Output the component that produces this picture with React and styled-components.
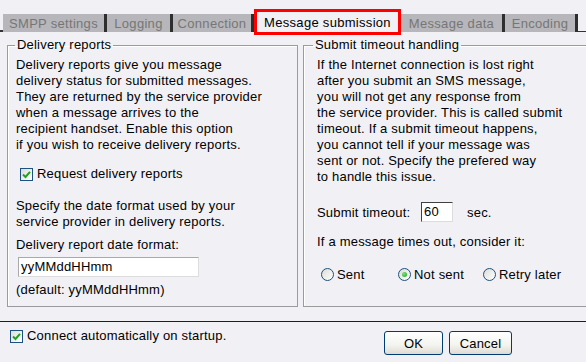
import React from "react";
import styled, { createGlobalStyle } from "styled-components";

const Global = createGlobalStyle`
  html, body { margin: 0; padding: 0; background: #f1f1f5; }
  body { font-family: "Liberation Sans", Arial, sans-serif; font-size: 13px; letter-spacing: 0.2px; color: #000; }
`;

const Window = styled.div`
  width: 586px;
  height: 362px;
  overflow: hidden;
  background: #f1f1f5;
  display: flex;
  flex-direction: column;
`;

const TabBar = styled.div`
  height: 18px;
  padding-top: 14px;
  padding-left: 3px;
  display: flex;
  align-items: flex-start;
  position: relative;
  &::before {
    content: "";
    position: absolute;
    left: 0;
    top: 30px;
    width: 3px;
    height: 2px;
    background: #333;
  }
  &::after {
    content: "";
    position: absolute;
    left: 578px;
    right: 0;
    top: 31px;
    height: 1px;
    background: #333;
  }
`;

const Tab = styled.div`
  box-sizing: border-box;
  width: ${(p) => p.$w}px;
  flex: none;
  display: flex;
  align-items: center;
  justify-content: center;
  white-space: nowrap;
  line-height: 16px;
  font-size: 13px;
  letter-spacing: 0.3px;
  ${(p) =>
    p.$active
      ? `
    position: relative;
    z-index: 1;
    margin-top: -5px;
    height: 26px;
    padding-top: 2px;
    border: 3px solid #ff0000;
    background: #f1f1f5;
    color: #000;
  `
      : `
    height: 18px;
    padding-top: 1px;
    background: #b7b7bb;
    color: #767676;
    border-right: 3px solid #2e2e2e;
  `}
`;

const Body = styled.div`
  display: flex;
  gap: 5px;
  margin-top: 5px;
  padding-left: 7px;
`;

const Group = styled.fieldset`
  box-sizing: border-box;
  margin: 0;
  width: ${(p) => p.$w}px;
  flex: none;
  height: 270px;
  padding: 4px 8px 0 ${(p) => p.$padLeft}px;
  border: 1px solid #9b9b9b;
  box-shadow: inset 1px 1px 0 #ffffff;
  min-width: 0;
`;

const Legend = styled.legend`
  padding: 0 2px;
  margin-left: ${(p) => p.$ml}px;
  line-height: 16px;
  font-size: 13px;
`;

const Para = styled.div`
  line-height: 16px;
  white-space: nowrap;
  margin-top: ${(p) => p.$mt || 0}px;
`;

const CheckRow = styled.label`
  display: flex;
  align-items: center;
  gap: 4px;
  height: 16px;
  margin-top: ${(p) => p.$mt || 0}px;
  margin-left: ${(p) => p.$ml || 0}px;
  line-height: 16px;
  white-space: nowrap;
`;

const CheckBox = styled.span`
  box-sizing: border-box;
  width: 13px;
  height: 13px;
  border: 1px solid #1c5180;
  background: linear-gradient(135deg, #dcdcd6, #ffffff);
  display: flex;
  align-items: center;
  justify-content: center;
  flex: none;
`;

const TextInput = styled.div`
  box-sizing: border-box;
  width: ${(p) => p.$w}px;
  height: 20px;
  background: #fff;
  border: 1px solid #dcdcdc;
  border-top-color: ${(p) => (p.$dark ? "#404040" : "#a9a9a9")};
  border-left-color: ${(p) => (p.$dark ? "#404040" : "#a9a9a9")};
  padding: 1px 2px;
  line-height: 16px;
  margin-top: ${(p) => p.$mt || 0}px;
  margin-left: ${(p) => p.$ml || 0}px;
  flex: none;
`;

const TimeoutRow = styled.div`
  display: flex;
  align-items: center;
  margin-top: 17px;
  height: 20px;
`;

const FixedLabel = styled.span`
  width: ${(p) => p.$w}px;
  margin-left: ${(p) => p.$ml || 0}px;
  flex: none;
  white-space: nowrap;
`;

const RadioRow = styled.div`
  display: flex;
  align-items: center;
  margin-top: 16px;
  height: 16px;
  padding-left: 4px;
`;

const RadioItem = styled.label`
  display: flex;
  align-items: center;
  gap: 3px;
  width: ${(p) => p.$w}px;
  flex: none;
  white-space: nowrap;
`;

const RadioCircle = styled.span`
  box-sizing: border-box;
  width: 13px;
  height: 13px;
  border-radius: 50%;
  border: 1px solid #1c5180;
  background: linear-gradient(135deg, #dcdcd6, #ffffff);
  display: flex;
  align-items: center;
  justify-content: center;
  flex: none;
  &::after {
    content: "";
    display: ${(p) => (p.$checked ? "block" : "none")};
    width: 5px;
    height: 5px;
    border-radius: 50%;
    background: radial-gradient(circle at 35% 35%, #7be37b, #21a121);
  }
`;

const Separator = styled.div`
  height: 1px;
  background: #1e1e1e;
  margin-top: 14px;
`;

const Footer = styled.div`
  display: flex;
  align-items: flex-start;
  padding: 0 74px 0 10px;
`;

const Buttons = styled.div`
  margin-left: auto;
  margin-top: 9px;
  display: flex;
  gap: 6px;
`;

const Button = styled.button`
  box-sizing: border-box;
  width: ${(p) => p.$w}px;
  height: 24px;
  border: 1px solid #003c74;
  border-radius: 3px;
  background: linear-gradient(#ffffff 0%, #f3f3ef 60%, #dedbd2 100%);
  font-family: "Liberation Sans", Arial, sans-serif;
  font-size: 13px;
  letter-spacing: 0.2px;
  color: #000;
  padding: 0;
  padding-top: 1px;
`;

const Check = () => (
  <svg width="9" height="9" viewBox="0 0 9 9">
    <path d="M1 4.5 L3.5 7 L8 1.8" stroke="#21a121" strokeWidth="2" fill="none" />
  </svg>
);

const leftText = [
  "Delivery reports give you message",
  "delivery status for submitted messages.",
  "They are returned by the service provider",
  "when a message arrives to the",
  "recipient handset. Enable this option",
  "if you wish to receive delivery reports.",
];

const rightText = [
  "If the Internet connection is lost right",
  "after you submit an SMS message,",
  "you will not get any response from",
  "the service provider. This is called submit",
  "timeout. If a submit timeout happens,",
  "you cannot tell if your message was",
  "sent or not. Specify the prefered way",
  "to handle this issue.",
];

export default function App() {
  return (
    <Window>
      <Global />
      <TabBar>
        <Tab $w={104}>SMPP settings</Tab>
        <Tab $w={66}>Logging</Tab>
        <Tab $w={81}>Connection</Tab>
        <Tab $w={147} $active>Message submission</Tab>
        <Tab $w={104}>Message data</Tab>
        <Tab $w={73}>Encoding</Tab>
      </TabBar>
      <Body>
        <Group $w={291} $padLeft={8}>
          <Legend $ml={-1}>Delivery reports</Legend>
          <Para>
            {leftText.map((l) => (
              <div key={l}>{l}</div>
            ))}
          </Para>
          <CheckRow $mt={13} $ml={4}>
            <CheckBox>
              <Check />
            </CheckBox>
            Request delivery reports
          </CheckRow>
          <Para $mt={16}>
            <div>Specify the date format used by your</div>
            <div>service provider in delivery reports.</div>
          </Para>
          <Para $mt={7}>Delivery report date format:</Para>
          <TextInput $w={181} $mt={4} $ml={2}>yyMMddHHmm</TextInput>
          <Para $mt={5}>(default: yyMMddHHmm)</Para>
        </Group>
        <Group $w={292} $padLeft={13}>
          <Legend $ml={-4}>Submit timeout handling</Legend>
          <Para>
            {rightText.map((l) => (
              <div key={l}>{l}</div>
            ))}
          </Para>
          <TimeoutRow>
            <FixedLabel $w={104}>Submit timeout:</FixedLabel>
            <TextInput $w={32} $dark>60</TextInput>
            <FixedLabel $w={40} $ml={14}>sec.</FixedLabel>
          </TimeoutRow>
          <Para $mt={12}>If a message times out, consider it:</Para>
          <RadioRow>
            <RadioItem $w={77}>
              <RadioCircle />
              Sent
            </RadioItem>
            <RadioItem $w={85}>
              <RadioCircle $checked />
              Not sent
            </RadioItem>
            <RadioItem $w={100}>
              <RadioCircle />
              Retry later
            </RadioItem>
          </RadioRow>
        </Group>
      </Body>
      <Separator />
      <Footer>
        <CheckRow $mt={6}>
          <CheckBox>
            <Check />
          </CheckBox>
          Connect automatically on startup.
        </CheckRow>
        <Buttons>
          <Button $w={59}>OK</Button>
          <Button $w={63}>Cancel</Button>
        </Buttons>
      </Footer>
    </Window>
  );
}
